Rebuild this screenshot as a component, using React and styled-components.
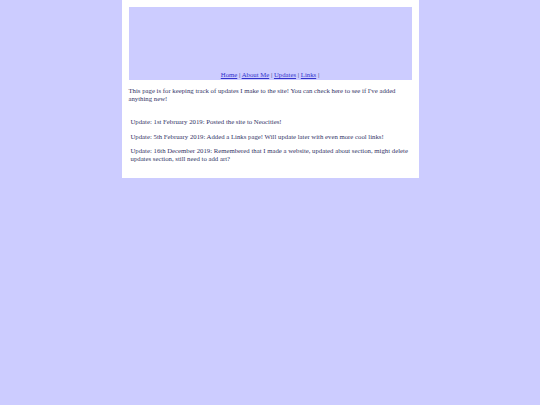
import React from "react";
import styled, { createGlobalStyle } from "styled-components";

const Global = createGlobalStyle`
  html, body { margin: 0; padding: 0; background: #ccccff; }
  body { font-family: "Liberation Serif", "Times New Roman", serif; font-size: 6.75px; color: #333366; }
`;

const Page = styled.div`
  width: 55%;
  margin: 0 auto;
  background: #ffffff;
  padding: 7px;
  box-sizing: border-box;
`;

const Header = styled.div`
  height: 73px;
  background: #ccccff;
  display: flex;
  flex-direction: column;
  justify-content: flex-end;
  align-items: center;
  padding-bottom: 1px;
  box-sizing: border-box;
`;

const Nav = styled.div`
  line-height: 8px;
  color: #333366;
`;

const NavLink = styled.a`
  color: #3333cc;
  text-decoration: underline;
`;

const Intro = styled.p`
  margin: 7px 0 6px;
  line-height: 8px;
`;

const Updates = styled.div`
  padding: 2px;
`;

const Update = styled.p`
  margin: 7px 0;
  line-height: 7.5px;
`;

const links = ["Home", "About Me", "Updates", "Links"];

const updates = [
  "Update: 1st February 2019: Posted the site to Neocities!",
  "Update: 5th February 2019: Added a Links page! Will update later with even more cool links!",
  "Update: 16th December 2019: Remembered that I made a website, updated about section, might delete updates section, still need to add art?",
];

export default function App() {
  return (
    <>
      <Global />
      <Page>
        <Header>
          <Nav>
            {links.map((l) => (
              <React.Fragment key={l}>
                <NavLink href="#">{l}</NavLink> |{" "}
              </React.Fragment>
            ))}
          </Nav>
        </Header>
        <Intro>
          This page is for keeping track of updates I make to the site! You can check here to see if I've added anything new!
        </Intro>
        <Updates>
          {updates.map((u) => (
            <Update key={u}>{u}</Update>
          ))}
        </Updates>
      </Page>
    </>
  );
}
